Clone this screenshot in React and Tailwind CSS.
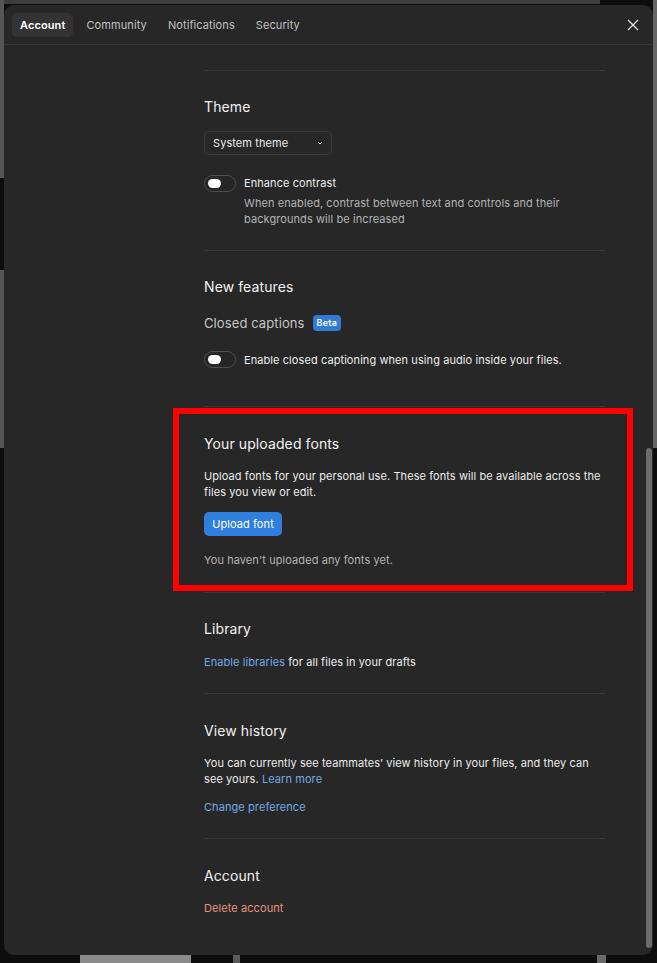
import React from "react";

const Divider = () => <div className="h-px bg-[#383838]" />;

const Heading = ({ children }) => (
  <div className="text-[14px] leading-[20px] text-[#f2f2f2] tracking-[0.1px]">{children}</div>
);

const Toggle = () => (
  <div className="relative w-[32px] h-[17px] shrink-0 rounded-full border border-[#505050] bg-[#262626] flex items-center">
    <div className="ml-[3px] w-[13px] h-[9px] rounded-full bg-white" />
  </div>
);

export default function App() {
  return (
    <div className="relative w-[657px] h-[963px] overflow-hidden bg-[#0d0d0d] pt-[5px] pl-[4px] font-['Inter',sans-serif]">
      {/* background app fragments */}
      <div className="absolute left-0 top-0 w-[600px] h-[4px] bg-[#3d3d3d]" />
      <div className="absolute left-0 top-0 w-[4px] h-[178px] bg-[#555]" />
      <div className="absolute left-0 top-[270px] w-[4px] h-[178px] bg-[#555]" />
      <div className="absolute right-0 top-0 w-[4px] h-[448px] bg-[#666]" />
      <div className="absolute left-[80px] top-[955px] w-[111px] h-[8px] bg-[#8a8a8a]" />
      <div className="absolute left-[233px] top-[955px] w-[7px] h-[8px] bg-[#5a5a5a]" />
      <div className="absolute left-[597px] top-[955px] w-[9px] h-[8px] bg-[#6a6a6a]" />

      <div className="relative w-[649px] h-[950px] rounded-[10px] bg-[#272727] overflow-hidden flex flex-col">
        {/* tabs */}
        <div className="h-[40px] shrink-0 border-b border-[#363636] flex items-center pl-[8px] pr-[14px] pt-[1px]">
          <div className="flex items-center gap-[5px] text-[11px] leading-[16px] tracking-[0.1px]">
            <div className="h-[24px] px-[8px] rounded-[5px] bg-[#333333] flex items-center font-semibold text-white">
              Account
            </div>
            <div className="h-[24px] px-[8px] flex items-center text-[#c2c2c2]">Community</div>
            <div className="h-[24px] px-[8px] flex items-center text-[#c2c2c2]">Notifications</div>
            <div className="h-[24px] px-[8px] flex items-center text-[#c2c2c2]">Security</div>
          </div>
          <svg className="ml-auto" width="12" height="12" viewBox="0 0 12 12" fill="none">
            <path d="M1 1L11 11M11 1L1 11" stroke="#e6e6e6" strokeWidth="1.3" />
          </svg>
        </div>

        {/* content */}
        <div className="relative flex-1 pt-[25px] pl-[200px]">
          <div className="w-[401px] flex flex-col text-[11px] leading-[16px] tracking-[0.08px]">
            <Divider />

            {/* Theme */}
            <div className="pt-[26px] pb-[23px] flex flex-col">
              <Heading>Theme</Heading>
              <div className="mt-[14px] w-[128px] h-[24px] rounded-[5px] border border-[#3d3d3d] flex items-center justify-between pl-[8px] pr-[7px] text-[#ececec]">
                <span>System theme</span>
                <svg width="8" height="8" viewBox="0 0 8 8" fill="none">
                  <path d="M2 3L4 5L6 3" stroke="#d0d0d0" strokeWidth="1" />
                </svg>
              </div>
              <div className="mt-[20px] flex gap-[8px]">
                <Toggle />
                <div className="flex flex-col">
                  <span className="text-[#ededed]">Enhance contrast</span>
                  <span className="mt-[4px] text-[#b3b3b3]">
                    When enabled, contrast between text and controls and their backgrounds will be increased
                  </span>
                </div>
              </div>
            </div>
            <Divider />

            {/* New features */}
            <div className="pt-[26px] pb-[38px] flex flex-col">
              <Heading>New features</Heading>
              <div className="mt-[16px] flex items-center gap-[8px] h-[20px]">
                <span className="text-[13px] text-[#c6c6c6] tracking-[0.1px]">Closed captions</span>
                <span className="h-[16px] px-[4px] rounded-[4px] bg-[#2f7bd6] text-white text-[9px] font-semibold flex items-center tracking-[0.2px]">
                  Beta
                </span>
              </div>
              <div className="mt-[18px] flex items-center gap-[8px] text-[#ededed]">
                <Toggle />
                <span>Enable closed captioning when using audio inside your files.</span>
              </div>
            </div>
            <Divider />

            {/* Fonts */}
            <div className="pt-[27px] pb-[24px] flex flex-col">
              <Heading>Your uploaded fonts</Heading>
              <p className="mt-[14px] text-[#ececec]">
                Upload fonts for your personal use. These fonts will be available across the files you view or edit.
              </p>
              <div className="mt-[12px] w-[78px] h-[24px] rounded-[5px] bg-[#2f80de] text-white flex items-center justify-center">
                Upload font
              </div>
              <p className="mt-[16px] text-[#b3b3b3]">You haven't uploaded any fonts yet.</p>
            </div>
            <Divider />

            {/* Library */}
            <div className="pt-[26px] pb-[23px] flex flex-col">
              <Heading>Library</Heading>
              <p className="mt-[15px] text-[#ececec]">
                <span className="text-[#72a9e6]">Enable libraries</span> for all files in your drafts
              </p>
            </div>
            <Divider />

            {/* View history */}
            <div className="pt-[27px] pb-[23px] flex flex-col">
              <Heading>View history</Heading>
              <p className="mt-[14px] text-[#ececec]">
                You can currently see teammates’ view history in your files, and they can see yours.{" "}
                <span className="text-[#72a9e6]">Learn more</span>
              </p>
              <p className="mt-[12px] text-[#72a9e6]">Change preference</p>
            </div>
            <Divider />

            {/* Account */}
            <div className="pt-[27px] flex flex-col">
              <Heading>Account</Heading>
              <p className="mt-[14px] text-[#e8927c]">Delete account</p>
            </div>
          </div>
        </div>

        {/* scrollbar thumb */}
        <div className="absolute right-[1px] top-[443px] w-[6px] h-[500px] rounded-full bg-[#6b6b6b]" />
      </div>

      {/* red annotation box */}
      <div className="absolute left-[173px] top-[408px] w-[460px] h-[183px] border-[6px] border-[#ff0000]" />
    </div>
  );
}
